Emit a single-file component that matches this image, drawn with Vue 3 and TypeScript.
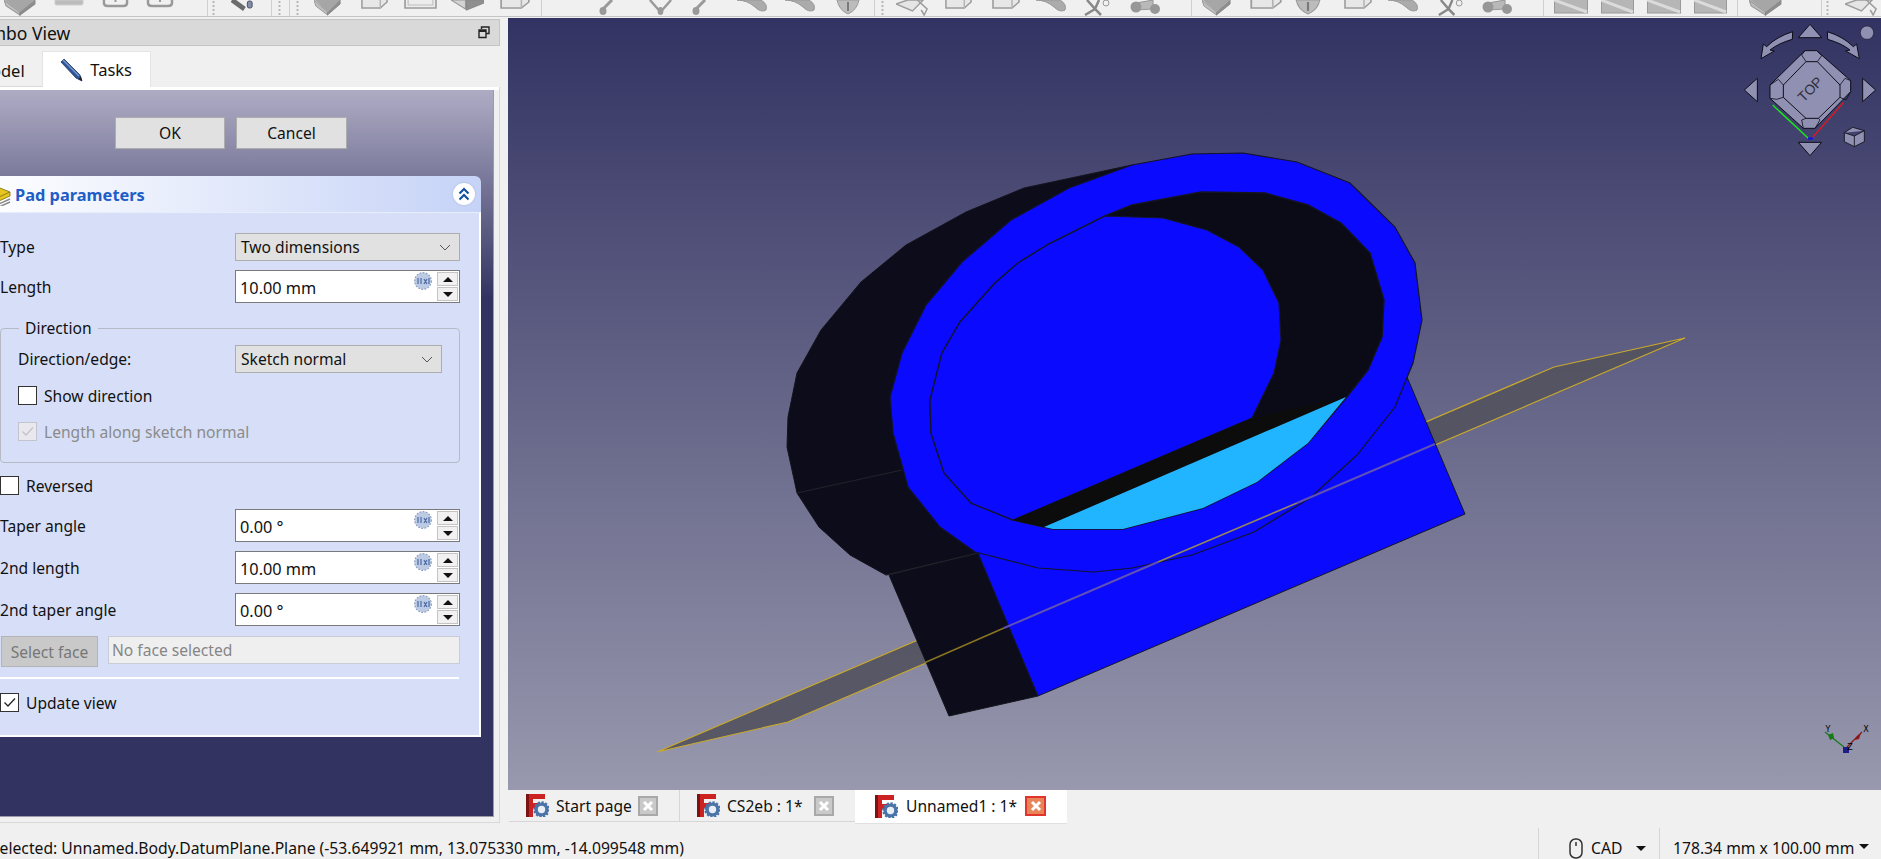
<script setup lang="ts">
// toolbar icons along the top edge: [start x, end x, symbol]
type BarItem = [number, number, string]

const barItems: BarItem[] = [
  [-20, 12, 'box'], [30, 60, 'slab'], [78, 105, 'round'], [122, 150, 'round'],
  [183, 184, 'sep'], [188, 191, 'handle'], [207, 232, 'wrench'], [247, 248, 'sep'],
  [254, 257, 'handle'], [265, 266, 'sep'], [272, 275, 'handle'], [290, 317, 'box'],
  [336, 365, 'page'], [380, 413, 'rect'], [427, 460, 'wedge'], [475, 507, 'page'],
  [517, 518, 'sep'], [575, 590, 'pin'], [623, 650, 'vee'], [668, 683, 'pin'],
  [713, 743, 'blob'], [761, 791, 'blob'], [812, 836, 'drop'], [850, 851, 'sep'],
  [857, 860, 'handle'], [872, 905, 'sheet'], [920, 949, 'page'], [967, 997, 'page'],
  [1012, 1042, 'blob'], [1057, 1087, 'shears'], [1105, 1138, 'wheels'], [1167, 1168, 'sep'],
  [1178, 1207, 'box'], [1225, 1259, 'page'], [1271, 1297, 'drop'], [1319, 1349, 'page'],
  [1364, 1394, 'blob'], [1411, 1440, 'shears'], [1457, 1490, 'wheels'], [1519, 1520, 'sep'],
  [1530, 1564, 'plate'], [1577, 1610, 'plate'], [1623, 1657, 'plate'], [1670, 1703, 'plate'],
  [1713, 1714, 'sep'], [1725, 1758, 'box'], [1797, 1798, 'sep'], [1802, 1805, 'handle'],
  [1821, 1854, 'sheet'],
]

const barLayout = barItems.map((item, i) => {
  const prevEnd = i === 0 ? -24 : barItems[i - 1][1]
  return { kind: item[2], width: item[1] - item[0], gap: item[0] - prevEnd }
})

// faceted outline of the part, in page coordinates
const ringOuter = '1191,154 1242,153 1296,162 1349,183 1394,227 1414,263 1421,320 1412,363 1394,407 1356,455 1309,498 1253,532 1191,555 1131,568 1093,572 1037,568 974,552 939,527 907,487 892,433 889,397 901,353 925,305 961,262 1010,220 1068,188 1131,165'
const holeEdge = '1200,192 1264,193 1307,205 1340,223 1369,253 1383,300 1381,337 1367,370 1345,398 1307,443 1256,482 1202,508 1122,529 1052,529 1043,527 1012,520 970,503 943,473 930,433 929,400 941,353 959,322 994,283 1017,263 1046,245 1104,216 1131,205'
const floor = '1104,216 1162,218 1206,230 1238,247 1262,270 1278,303 1280,340 1273,373 1251,418 1012,520 970,503 943,473 930,433 929,400 941,353 959,322 994,283 1017,263 1046,245'
const wall = '1131,165 1023,188 965,212 905,245 860,282 820,330 796,373 787,417 786,447 796,493 818,527 849,555 885,575 977,553 1010,500 901,353'
const sliver = '1043,527 1345,397 1307,443 1256,482 1202,508 1122,529 1052,529'
</script>

<template>
  <div class="app">
    <svg class="defs" width="0" height="0">
      <defs>
        <symbol id="box" viewBox="0 0 30 16" preserveAspectRatio="none">
          <path d="M0 0 15 12V15L2 6Z" fill="#b5b5b5" stroke="#8a8a8a" />
          <path d="M15 12 29 0V4L15 15Z" fill="#7d7d7d" stroke="#777" />
          <path d="M1 0H29L15 12Z" fill="#9a9a9a" />
        </symbol>
        <symbol id="slab" viewBox="0 0 30 16" preserveAspectRatio="none">
          <path d="M1 0H29V4Q29 5 27 5H3Q1 5 1 4Z" fill="#b4b4b4" stroke="#c8c8c8" />
        </symbol>
        <symbol id="round" viewBox="0 0 28 16" preserveAspectRatio="none">
          <path d="M2 0V3Q2 6 6 6H22Q26 6 26 3V0" fill="none" stroke="#8a8a8a" stroke-width="2.5" />
          <path d="M14 0V2" stroke="#8a8a8a" stroke-width="2" />
        </symbol>
        <symbol id="wrench" viewBox="0 0 26 16" preserveAspectRatio="none">
          <path d="M1 0 14 9" stroke="#555" stroke-width="5" fill="none" />
          <rect x="17" y="1" width="5" height="7" rx="2" fill="#6f7f9f" stroke="#334" />
        </symbol>
        <symbol id="page" viewBox="0 0 30 16" preserveAspectRatio="none">
          <path d="M2 0V8H21L28 2V0" fill="#e6e6e6" stroke="#8f8f8f" stroke-width="1.6" />
          <path d="M21 0V8" stroke="#aaa" stroke-width="1.5" />
        </symbol>
        <symbol id="rect" viewBox="0 0 32 16" preserveAspectRatio="none">
          <path d="M1 0V8H31V0" fill="#ececec" stroke="#8f8f8f" stroke-width="1.6" />
          <path d="M4 0V5H28V0" fill="none" stroke="#b5b5b5" />
        </symbol>
        <symbol id="wedge" viewBox="0 0 32 16" preserveAspectRatio="none">
          <path d="M0 0 14 9V0Z" fill="#cfcfcf" stroke="#888" />
          <path d="M15 10 32 3V0H15Z" fill="#7f7f7f" stroke="#777" />
        </symbol>
        <symbol id="pin" viewBox="0 0 15 16" preserveAspectRatio="none">
          <path d="M13 0 5 8" stroke="#8a8a8a" stroke-width="3" />
          <ellipse cx="4" cy="11" rx="3.5" ry="4" fill="#8a8a8a" />
        </symbol>
        <symbol id="vee" viewBox="0 0 28 16" preserveAspectRatio="none">
          <path d="M3 0 14 12 25 0" fill="none" stroke="#8a8a8a" stroke-width="2.5" />
          <ellipse cx="14" cy="11" rx="3" ry="4" fill="#8a8a8a" />
        </symbol>
        <symbol id="blob" viewBox="0 0 30 16" preserveAspectRatio="none">
          <path d="M0 0Q10 0 18 7 24 13 29 10 31 4 24 0Z" fill="#a0a0a0" stroke="#888" />
        </symbol>
        <symbol id="drop" viewBox="0 0 24 16" preserveAspectRatio="none">
          <path d="M1 0Q3 10 12 14 21 10 23 0Z" fill="#b4b4b4" stroke="#8a8a8a" />
          <path d="M12 2V11" stroke="#666" stroke-width="2" />
        </symbol>
        <symbol id="sheet" viewBox="0 0 34 16" preserveAspectRatio="none">
          <path d="M0 4 12 0H28L17 11Z" fill="#e4e4e4" stroke="#8f8f8f" stroke-width="1.4" />
          <path d="M22 0 32 9 29 15 26 10" fill="none" stroke="#8f8f8f" stroke-width="1.6" />
        </symbol>
        <symbol id="shears" viewBox="0 0 30 16" preserveAspectRatio="none">
          <path d="M6 0 14 9 4 15M18 0 14 9 20 15" fill="none" stroke="#777" stroke-width="2.5" />
          <circle cx="25" cy="3" r="3" fill="none" stroke="#888" />
        </symbol>
        <symbol id="wheels" viewBox="0 0 33 16" preserveAspectRatio="none">
          <path d="M7 3 24 0V9L7 10Z" fill="#b0b0b0" stroke="#888" />
          <circle cx="7" cy="7" r="5.5" fill="#888" />
          <circle cx="26" cy="9" r="5" fill="#888" />
        </symbol>
        <symbol id="plate" viewBox="0 0 34 16" preserveAspectRatio="none">
          <rect x="0.5" y="-4" width="33" height="17" fill="#adadad" stroke="#8a8a8a" />
          <path d="M0 0 33 12" stroke="#d8d8d8" stroke-width="3" />
        </symbol>
        <symbol id="fclogo" viewBox="0 0 23 23">
          <path d="M0 0H19V5H7V9H15V14H7V23H0Z" fill="#cc2222" />
          <path d="M0 0H3V23H0Z" fill="#7a1414" />
          <circle cx="15.5" cy="15.5" r="5.4" fill="#e8eef8" stroke="#4a74a8" stroke-width="3.4" />
          <circle cx="15.5" cy="15.5" r="7.3" fill="none" stroke="#4a74a8" stroke-width="2" stroke-dasharray="2.2 1.6" />
        </symbol>
        <symbol id="fx" viewBox="0 0 18 18">
          <circle cx="9" cy="9" r="8" fill="#bccbe3" />
          <circle cx="9" cy="9" r="8.3" fill="none" stroke="#8b9dbd" stroke-width="1.2" stroke-dasharray="2 1.2" />
          <path d="M4 6V12M7 6 7 12M10 7 13 12M13 7 10 12M15 6V12" stroke="#4a6aa4" stroke-width="1.2" fill="none" />
        </symbol>
      </defs>
    </svg>

    <div class="toolbar">
      <template v-for="(it, i) in barLayout" :key="i">
        <span v-if="it.kind === 'sep'" class="bar-sep" :style="{ marginLeft: it.gap + 'px' }"></span>
        <span v-else-if="it.kind === 'handle'" class="bar-handle" :style="{ marginLeft: it.gap + 'px' }"></span>
        <svg v-else class="bar-icon" :width="it.width" height="16" :style="{ marginLeft: it.gap + 'px' }">
          <use :href="'#' + it.kind" width="100%" height="100%" />
        </svg>
      </template>
    </div>

    <div class="main">
      <aside class="sidebar">
        <div class="dock-title">
          <span>Combo View</span>
          <svg class="float-icon" width="12" height="13" viewBox="0 0 12 13">
            <path d="M3.5 3V1H11V7.5H8.5M1 4H8V11.5H1Z" fill="none" stroke="#222" stroke-width="1.4" />
            <path d="M1 5H8" stroke="#222" stroke-width="2" />
          </svg>
        </div>
        <div class="dock-tabs">
          <div class="dock-tab">Model</div>
          <div class="dock-tab active">
            <svg width="23" height="24" viewBox="0 0 23 24">
              <path d="M1 4 4 1 20 17 22 23 16 20Z" fill="#2f5597" stroke="#1d3766" stroke-width="0.8" />
              <path d="M3 2 19 18" stroke="#7c9ad0" stroke-width="1.2" />
              <path d="M18.5 21 21 18.5 22 23Z" fill="#222" />
            </svg>
            <span>Tasks</span>
          </div>
        </div>

        <div class="task-frame">
          <div class="task-panel">
            <div class="dialog-buttons">
              <button class="push">OK</button>
              <button class="push">Cancel</button>
            </div>

            <section class="card">
              <header class="card-head">
                <svg class="pad-icon" width="24" height="24" viewBox="0 0 24 24">
                  <path d="M2 11 13 6 23 10 23 14 12 19 2 15Z" fill="#e6c51e" stroke="#7a6a10" stroke-width="0.8" />
                  <path d="M2 11 12 15 23 10" fill="none" stroke="#7a6a10" stroke-width="0.8" />
                  <path d="M2 18 12 22 23 17M2 21 12 25 23 20" fill="none" stroke="#888" stroke-width="1.4" />
                </svg>
                <span class="card-title">Pad parameters</span>
                <span class="collapse">
                  <svg width="12" height="14" viewBox="0 0 12 14">
                    <path d="M1.5 6.5 6 2 10.5 6.5M1.5 12.5 6 8 10.5 12.5" fill="none" stroke="#0b4ea2" stroke-width="2" />
                  </svg>
                </span>
              </header>

              <div class="card-body">
                <div class="row">
                  <label>Type</label>
                  <div class="combo">Two dimensions<svg width="12" height="7" viewBox="0 0 12 7"><path d="M1 1 6 6 11 1" fill="none" stroke="#555" /></svg></div>
                </div>
                <div class="row gap9">
                  <label>Length</label>
                  <div class="quantity">
                    <span>10.00 mm</span>
                    <svg class="fx" width="18" height="18"><use href="#fx" /></svg>
                    <div class="spin"><i class="up"></i><i class="down"></i></div>
                  </div>
                </div>

                <div class="group">
                  <span class="legend">Direction</span>
                  <div class="row inner">
                    <label>Direction/edge:</label>
                    <div class="combo">Sketch normal<svg width="12" height="7" viewBox="0 0 12 7"><path d="M1 1 6 6 11 1" fill="none" stroke="#555" /></svg></div>
                  </div>
                  <div class="check gap13"><span class="box"></span>Show direction</div>
                  <div class="check gap17 disabled">
                    <span class="box">
                      <svg width="17" height="17" viewBox="0 0 17 17"><path d="M3.5 8.5 7 12 14 4.5" fill="none" stroke="#c4c4c4" stroke-width="1.3" /></svg>
                    </span>Length along sketch normal
                  </div>
                </div>

                <div class="check gap13"><span class="box"></span>Reversed</div>
                <div class="row gap14">
                  <label>Taper angle</label>
                  <div class="quantity">
                    <span>0.00 °</span>
                    <svg class="fx" width="18" height="18"><use href="#fx" /></svg>
                    <div class="spin"><i class="up"></i><i class="down"></i></div>
                  </div>
                </div>
                <div class="row gap9">
                  <label>2nd length</label>
                  <div class="quantity">
                    <span>10.00 mm</span>
                    <svg class="fx" width="18" height="18"><use href="#fx" /></svg>
                    <div class="spin"><i class="up"></i><i class="down"></i></div>
                  </div>
                </div>
                <div class="row gap9">
                  <label>2nd taper angle</label>
                  <div class="quantity">
                    <span>0.00 °</span>
                    <svg class="fx" width="18" height="18"><use href="#fx" /></svg>
                    <div class="spin"><i class="up"></i><i class="down"></i></div>
                  </div>
                </div>
                <div class="face-row">
                  <button class="select-face">Select face</button>
                  <div class="face-field">No face selected</div>
                </div>
                <div class="rule"></div>
                <div class="check gap14">
                  <span class="box">
                    <svg width="17" height="17" viewBox="0 0 17 17"><path d="M3.5 8.5 7 12 14 4.5" fill="none" stroke="#222" stroke-width="1.3" /></svg>
                  </span>Update view
                </div>
              </div>
            </section>
          </div>
        </div>
      </aside>

      <div class="work">
        <div class="viewport">
          <!-- scene coordinates are page pixels, the viewBox starts at the viewport corner -->
          <svg class="scene" width="1374" height="772" viewBox="507 18 1374 772">
            <polygon points="656,752 787,722 1684,338 1553,367" fill="#52525f" fill-opacity="0.92" stroke="#c9a92c" stroke-width="1.2" />
            <polygon points="888,575 948,716 1037,696 977,553" fill="#0c0c1b" stroke="#16161e" />
            <polygon points="977,553 1037,696 1464,514 1406,377" fill="#0a0aff" stroke="#14142a" />
            <polygon :points="wall" fill="#0c0c1b" stroke="#14141c" />
            <path d="M796 493 901 470M885 575 977 553" stroke="#23232a" stroke-width="1.2" />
            <polygon :points="ringOuter" fill="#0a0aff" stroke="#14142a" stroke-width="1.2" />
            <polygon :points="holeEdge" fill="#0b0b17" stroke="#14141c" stroke-width="1.4" />
            <polygon :points="floor" fill="#0a0aff" stroke="#14142a" stroke-width="1.2" />
            <polygon points="1012,520 1251,418 1345,397 1043,527" fill="#0c0c0c" />
            <polygon :points="sliver" fill="#22b5ff" />
            <path d="M923 663 1003 628" stroke="#8a7520" stroke-width="1.5" />
            <path d="M1003 628 1157 562" stroke="#5f52b4" stroke-width="2" />
            <path d="M1157 562 1296 503" stroke="#96875a" stroke-width="1.6" />
            <path d="M1296 503 1434 444" stroke="#5f52b4" stroke-width="2" />

            <!-- axis cross -->
            <g>
              <path d="M1843 747 1824 732" stroke="#177a17" stroke-width="1.2" />
              <path d="M1846 747 1861 732" stroke="#8c1a1a" stroke-width="1.2" />
              <path d="M1827 735 1832 733 1833 738 1829 740Z" fill="#177a17" />
              <path d="M1855 737 1860 733 1858 739 1854 740Z" fill="#8c1a1a" />
              <rect x="1842" y="747" width="6" height="6" fill="#1d1d88" />
              <text x="1827" y="732" class="axis-label">Y</text>
              <text x="1865" y="732" class="axis-label">X</text>
              <text x="1849" y="750" class="axis-label">Z</text>
            </g>
          </svg>

          <svg class="navicube" width="161" height="160" viewBox="0 0 483 480">
            <g fill="#9090b2" stroke="#0c0c18" stroke-width="3" stroke-linejoin="round">
              <path d="M270 43 305 83H235Z" />
              <path d="M235 397H305L270 437Z" />
              <path d="M112 205V275L73 240Z" />
              <path d="M428 205V275L467 240Z" />
              <path d="M218 65 217 88Q175 100 150 120L163 123 123 146 130 102 140 110Q170 80 218 65Z" />
              <path d="M322 65 323 88Q365 100 390 120L377 123 418 146 410 102 400 110Q370 80 322 65Z" />
              <circle cx="441" cy="68" r="20" stroke-width="1.5" />
              <path d="M255 122H290L392 212V245L285 355H250L150 265V225Z" />
              <path d="M258 155H292L360 225V262L295 325H258L190 262V225Z" />
              <path d="M255 122 245 135 258 155M290 122 305 137 292 155M392 212 375 205 360 225M392 245 378 270 360 262M285 355 300 330 295 325M250 355 245 330 258 325M150 265 170 268 190 262M150 225 175 208 190 225" fill="none" stroke-width="2.4" />
              <path d="M373 368 398 352 433 362V395L403 410 373 395ZM373 368 403 378 433 362M403 378V410" stroke-width="2.5" />
            </g>
            <path d="M158 285 265 385" stroke="#18ee18" stroke-width="4" />
            <path d="M370 278 275 385" stroke="#ee1515" stroke-width="4" />
            <rect x="264" y="382" width="15" height="7" fill="#1414dd" />
            <text class="top-label" x="273" y="240" transform="rotate(-45 273 240)">TOP</text>
          </svg>
        </div>

        <div class="doc-tabs">
          <div class="doc-tab first">
            <svg width="23" height="23"><use href="#fclogo" /></svg>
            <span>Start page</span>
            <span class="tab-close"><svg width="12" height="12" viewBox="0 0 12 12"><path d="M2 2 10 10M10 2 2 10" stroke="#fff" stroke-width="3" /></svg></span>
          </div>
          <div class="doc-tab second">
            <svg width="23" height="23"><use href="#fclogo" /></svg>
            <span>CS2eb : 1*</span>
            <span class="tab-close"><svg width="12" height="12" viewBox="0 0 12 12"><path d="M2 2 10 10M10 2 2 10" stroke="#fff" stroke-width="3" /></svg></span>
          </div>
          <div class="doc-tab current">
            <svg width="23" height="23"><use href="#fclogo" /></svg>
            <span>Unnamed1 : 1*</span>
            <span class="tab-close hot"><svg width="12" height="12" viewBox="0 0 12 12"><path d="M2 2 10 10M10 2 2 10" stroke="#fff" stroke-width="3" /></svg></span>
          </div>
        </div>
      </div>
    </div>

    <footer class="status">
      <span class="status-msg">Selected: Unnamed.Body.DatumPlane.Plane (-53.649921 mm, 13.075330 mm, -14.099548 mm)</span>
      <div class="status-nav">
        <svg width="14" height="21" viewBox="0 0 14 21">
          <rect x="1" y="1" width="12" height="19" rx="5.5" fill="none" stroke="#333" stroke-width="1.5" />
          <path d="M7 4V8" stroke="#333" stroke-width="1.5" />
        </svg>
        <span class="nav-name">CAD</span>
        <i class="caret"></i>
      </div>
      <div class="status-size">
        <span>178.34 mm x 100.00 mm</span>
        <i class="caret"></i>
      </div>
    </footer>
  </div>
</template>

<style>
html,
body {
  margin: 0;
  overflow: hidden;
}
</style>

<style scoped>
.app {
  width: 1881px;
  height: 859px;
  overflow: hidden;
  display: flex;
  flex-direction: column;
  background: #f0f0f0;
  color: #111;
  font-family: "Noto Sans", "Liberation Sans", sans-serif;
  font-size: 15.6px;
}

.defs {
  position: absolute;
}

.toolbar {
  flex: 0 0 17px;
  box-sizing: border-box;
  display: flex;
  align-items: flex-start;
  border-bottom: 1px solid #c4c4c4;
  overflow: hidden;
}

.bar-icon {
  flex-shrink: 0;
  display: block;
  opacity: 0.85;
  filter: blur(0.4px);
}

.bar-sep {
  flex: 0 0 1px;
  height: 16px;
  background: #cfcfcf;
}

.bar-handle {
  flex: 0 0 3px;
  height: 16px;
  background-image: radial-gradient(circle, #b4b4b4 1px, transparent 1.2px);
  background-size: 3px 4px;
}

.main {
  flex: 1;
  display: flex;
  min-height: 0;
}

.sidebar {
  flex: 0 0 523px;
  margin-left: -24px;
  margin-right: 8px;
  display: flex;
  flex-direction: column;
  padding-top: 2px;
  box-sizing: border-box;
}

.dock-title {
  height: 27px;
  box-sizing: border-box;
  display: flex;
  align-items: center;
  justify-content: space-between;
  padding: 0 9px 0 0;
  background: #d9d9d9;
  border: 1px solid #c4c4c4;
  font-size: 17.5px;
}

.dock-title > span {
  margin-left: -9px;
}

.dock-tabs {
  margin-top: 5px;
  height: 36px;
  display: flex;
}

.dock-tab {
  flex: 0 0 64px;
  display: flex;
  align-items: center;
  justify-content: center;
  gap: 7px;
  padding-top: 3px;
  box-sizing: border-box;
  border-bottom: 1px solid #d9d9d9;
  font-size: 16.5px;
}

.dock-tab:first-child {
  justify-content: flex-end;
  padding-right: 17px;
}

.dock-tab.active {
  flex: 0 0 109px;
  background: #fff;
  border: 1px solid #e4e4e4;
  border-bottom: 0;
  padding: 0;
}

.task-frame {
  flex: 1;
  margin-bottom: 3px;
  display: flex;
  padding: 3px 5px 5px 0;
  background: linear-gradient(#fff 3px, #f0f0f0 3px);
  border-right: 1px solid #d9d9d9;
  border-bottom: 1px solid #d9d9d9;
  min-height: 0;
}

.task-panel {
  flex: 1;
  padding-top: 27px;
  background: linear-gradient(#aeacc4 0, #333362 208px);
  border-right: 1px solid #9a9aa8;
  border-bottom: 1px solid #9a9aa8;
}

.dialog-buttons {
  display: flex;
  gap: 11px;
  padding-left: 139px;
}

.push {
  width: 110px;
  height: 32px;
  background: #e1e1e1;
  border: 1px solid #adadad;
  font: inherit;
  color: #111;
  padding: 0;
}

.push + .push {
  width: 111px;
}

.card {
  margin: 27px 12px 0 0;
}

.card-head {
  height: 36px;
  box-sizing: border-box;
  display: flex;
  align-items: center;
  background: linear-gradient(90deg, #fff 0, #c6d3f7 100%);
  border-top-right-radius: 6px;
  padding-right: 6px;
}

.pad-icon {
  margin-left: 11px;
  flex-shrink: 0;
}

.card-title {
  margin-left: 4px;
  color: #215dc6;
  font-weight: 700;
  font-size: 16.4px;
  flex: 1;
}

.collapse {
  width: 22px;
  height: 22px;
  border-radius: 50%;
  background: #fff;
  box-shadow: 0 0 2px #9fb0d8;
  display: flex;
  align-items: center;
  justify-content: center;
}

.card-body {
  height: 525px;
  box-sizing: border-box;
  background: #d6dff7;
  border-top: 1px solid #e8edfb;
  border-right: 2px solid #fff;
  border-bottom: 2px solid #fff;
  padding: 20px 19px 0 24px;
}

.row {
  display: grid;
  grid-template-columns: 235px 225px;
  align-items: center;
}

.gap9 {
  margin-top: 9px;
}

.gap13 {
  margin-top: 13px;
}

.gap14 {
  margin-top: 14px;
}

.gap17 {
  margin-top: 17px;
}

.combo {
  height: 28px;
  box-sizing: border-box;
  display: flex;
  align-items: center;
  justify-content: space-between;
  padding: 0 8px 0 5px;
  background: #e1e1e1;
  border: 1px solid #adadad;
}

.quantity {
  height: 33px;
  box-sizing: border-box;
  position: relative;
  display: flex;
  align-items: center;
  padding: 2px 0 0 4px;
  background: #fff;
  border: 1px solid #7a7a7a;
  font-size: 16.3px;
}

.fx {
  position: absolute;
  top: 1px;
  right: 27px;
}

.spin {
  position: absolute;
  top: 1px;
  right: 1px;
  bottom: 1px;
  width: 21px;
  display: flex;
  flex-direction: column;
  gap: 1px;
}

.spin i {
  flex: 1;
  display: flex;
  align-items: center;
  justify-content: center;
  background: #f1f1f1;
  border: 1px solid #c4c4c4;
}

.spin i::after {
  content: "";
  border-left: 5px solid transparent;
  border-right: 5px solid transparent;
}

.spin .up::after {
  border-bottom: 5px solid #111;
}

.spin .down::after {
  border-top: 5px solid #111;
}

.group {
  position: relative;
  margin-top: 25px;
  height: 135px;
  box-sizing: border-box;
  padding: 16px 17px 0 17px;
  border: 1px solid #b6bac6;
  border-radius: 4px;
}

.group .inner {
  grid-template-columns: 217px 207px;
}

.legend {
  position: absolute;
  top: -12px;
  left: 18px;
  padding: 0 6px;
  background: #d6dff7;
}

.check {
  display: flex;
  align-items: center;
  gap: 7px;
  height: 19px;
}

.box {
  width: 19px;
  height: 19px;
  box-sizing: border-box;
  background: #fff;
  border: 1px solid #333;
  display: flex;
  align-items: center;
  justify-content: center;
  flex-shrink: 0;
}

.check.disabled {
  color: #8b8b8b;
}

.check.disabled .box {
  background: #e8e8ee;
  border-color: #c4c4cc;
}

.face-row {
  display: flex;
  align-items: flex-start;
  margin-top: 10px;
  margin-left: 1px;
}

.select-face {
  width: 97px;
  height: 31px;
  padding: 0;
  background: #c9c9c9;
  border: 1px solid #b4b4b4;
  color: #777;
  font: inherit;
}

.face-field {
  margin-left: 10px;
  width: 352px;
  height: 28px;
  box-sizing: border-box;
  padding-left: 3px;
  line-height: 26px;
  color: #868686;
  background: #efefef;
  border: 1px solid #fafafa;
  outline: 1px solid #c8ccd6;
  outline-offset: -1px;
}

.rule {
  margin-top: 10px;
  height: 2px;
  width: 459px;
  background: #fff;
}

.work {
  flex: 1;
  display: flex;
  flex-direction: column;
  min-width: 0;
  padding-top: 1px;
}

.viewport {
  flex: 1;
  position: relative;
  background: linear-gradient(#333363, #9898ae);
  overflow: hidden;
}

.scene {
  position: absolute;
  inset: 0;
}

.navicube {
  position: absolute;
  top: -8px;
  right: 0;
}

.top-label {
  font-family: "Liberation Sans", sans-serif;
  font-size: 42px;
  fill: #2f2f3c;
  text-anchor: middle;
  dominant-baseline: middle;
}

.axis-label {
  font-family: "DejaVu Sans", sans-serif;
  font-size: 8px;
  fill: #000;
  text-anchor: middle;
}

.doc-tabs {
  flex: 0 0 36px;
  display: flex;
  align-items: flex-start;
  padding-left: 1px;
}

.doc-tab {
  height: 32px;
  box-sizing: border-box;
  display: flex;
  align-items: center;
  border-bottom: 1px solid #d6d6d6;
}

.doc-tab span:first-of-type {
  margin-left: 7px;
}

.doc-tab.first {
  width: 171px;
  padding-left: 17px;
  border-right: 1px solid #d6d6d6;
}

.doc-tab.second {
  width: 175px;
  padding-left: 17px;
}

.doc-tab.current {
  width: 212px;
  height: 35px;
  margin-top: -1px;
  padding-left: 20px;
  background: #fff;
  border: 0;
  border-bottom: 1px solid #e0e0e0;
}

.doc-tab.current span:first-of-type {
  margin-left: 8px;
}

.tab-close {
  margin-left: auto;
  margin-right: 21px;
  width: 20px;
  height: 20px;
  box-sizing: border-box;
  display: flex;
  align-items: center;
  justify-content: center;
  background: #c9c9c9;
  border: 2px solid #a8a8a8;
}

.tab-close.hot {
  width: 21px;
  background: #e88458;
  border-color: #e0352c;
}

.status {
  flex: 0 0 33px;
  display: flex;
  align-items: stretch;
  padding-top: 2px;
  box-sizing: border-box;
  font-size: 15.7px;
}

.status-msg {
  flex: 1;
  margin-left: -9px;
  padding-top: 9px;
  line-height: 22px;
  white-space: nowrap;
}

.status-nav {
  width: 121px;
  box-sizing: border-box;
  border-left: 1px solid #d6d6d6;
  display: flex;
  align-items: center;
  padding: 9px 0 0 30px;
}

.nav-name {
  margin-left: 8px;
  flex: 1;
}

.status-nav .caret {
  margin-right: 13px;
}

.status-size {
  width: 222px;
  box-sizing: border-box;
  border-left: 1px solid #d6d6d6;
  display: flex;
  align-items: center;
  padding: 9px 0 0 13px;
}

.status-size .caret {
  margin: -4px 0 0 5px;
}

.caret {
  border-left: 5px solid transparent;
  border-right: 5px solid transparent;
  border-top: 5px solid #111;
}
</style>
